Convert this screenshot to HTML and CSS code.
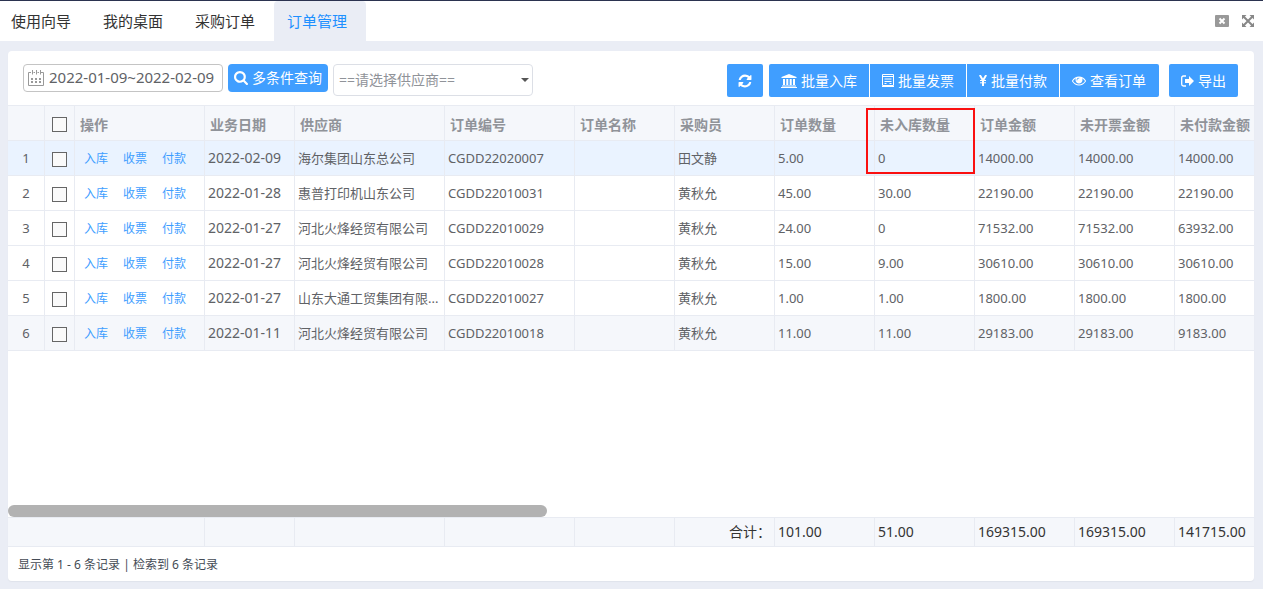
FILE: index.html
```html
<!DOCTYPE html>
<html lang="zh-CN">
<head>
<meta charset="utf-8">
<title>订单管理</title>
<link rel="stylesheet" href="styles.css">
</head>
<body>
<header class="topbar">
  <nav class="tabs">
    <a class="tab" href="#guide">使用向导</a>
    <a class="tab" href="#desktop">我的桌面</a>
    <a class="tab" href="#purchase">采购订单</a>
    <a class="tab tab-active" href="#orders" aria-current="page">订单管理</a>
  </nav>
  <div class="window-tools">
    <button class="tool" aria-label="关闭"><svg width="14" height="12" viewBox="0 0 14 12"><rect width="14" height="12" rx="1" fill="#999"/><path d="M4.500 3.500l5 5M9.500 3.500l-5 5" stroke="#fff" stroke-width="2"/></svg></button>
    <button class="tool" aria-label="全屏"><svg width="12" height="12" viewBox="0 0 12 12"><path d="M0 0h4.500L0 4.500zM12 0v4.500L7.500 0zM0 12V7.500L4.500 12zM12 12H7.500L12 7.500z" fill="#888"/><path d="M1.500 1.500l9 9M10.500 1.500l-9 9" stroke="#888" stroke-width="2"/></svg></button>
  </div>
</header>
<main class="card">
  <form class="toolbar">
    <div class="filters">
      <label class="date-box">
        <svg width="16" height="16" viewBox="0 0 16 16" fill="none" stroke="#999"><path d="M3 2.500H.500v13h15v-13H13M5.500 2.500H7M9.500 2.500H11"/><path d="M4.500 0v4.500M8.500 0v4.500M12.500 0v4.500"/><path d="M3 9h10M3 12h10" stroke-width="2" stroke-dasharray="2"/></svg>
        <input class="date-input" type="text" value="2022-01-09~2022-02-09" aria-label="日期范围">
      </label>
      <button type="button" class="btn btn-search"><svg width="14" height="14" viewBox="64 128 1664 1664" fill="currentColor"><path d="M1216 832q0-185-131.500-316.500t-316.500-131.500-316.500 131.500-131.500 316.500 131.500 316.500 316.500 131.500 316.500-131.500 131.500-316.500zm512 832q0 52-38 90t-90 38q-54 0-90-38l-343-342q-179 124-399 124-143 0-273.500-55.500t-225-150-150-225-55.500-273.500 55.500-273.500 150-225 225-150 273.500-55.500 273.500 55.500 225 150 150 225 55.500 273.500q0 220-124 399l343 343q37 37 37 90z"/></svg>多条件查询</button>
      <div class="select-box">
        <select class="select" aria-label="供应商"><option>==请选择供应商==</option></select>
      </div>
    </div>
    <div class="actions">
      <button type="button" class="btn btn-refresh" aria-label="刷新"><svg width="14" height="14" viewBox="64 64 1664 1664" fill="currentColor"><path d="M1639 1056q0 5-1 7-64 268-268 434.500t-478 166.500q-146 0-282.500-55t-243.500-157l-129 129q-19 19-45 19t-45-19-19-45v-448q0-26 19-45t45-19h448q26 0 45 19t19 45-19 45l-137 137q71 66 161 102t187 36q134 0 250-65t186-179q11-17 53-117 8-23 30-23h192q13 0 22.500 9.500t9.500 22.500zm25-800v448q0 26-19 45t-45 19h-448q-26 0-45-19t-19-45 19-45l138-138q-148-137-349-137-134 0-250 65t-186 179q-11 17-53 117-8 23-30 23h-199q-13 0-22.500-9.500t-9.500-22.500v-7q65-268 270-434.500t480-166.500q146 0 284 55.500t245 156.500l130-129q19-19 45-19t45 19 19 45z"/></svg></button>
      <div class="btn-group">
        <button type="button" class="btn"><svg width="16" height="14" viewBox="0 0 16 14" fill="currentColor"><path d="M8 0l7.500 3v1h-15V3zM2 5h2v6H2zM5.300 5h2v6h-2zM8.700 5h2v6h-2zM12 5h2v6h-2zM1 11.500h14v1H1zM0 13h16v1H0z"/></svg>批量入库</button>
        <button type="button" class="btn"><svg width="12" height="13" viewBox="0 0 12 13" fill="none" stroke="currentColor"><path d="M.500 .500h11v11H.500zM.500 2.500h11M2.500 5h7M2.500 7.500h7M2.500 9.500h2M7.500 9.500h2M0 12.500h12"/></svg>批量发票</button>
        <button type="button" class="btn"><svg width="8" height="11" viewBox="0 0 8 11" fill="none" stroke="currentColor"><path d="M.800 0L4 5.500 7.200 0M4 5v6" stroke-width="2"/><path d="M1 5.500h6M1 7.800h6"/></svg>批量付款</button>
        <button type="button" class="btn"><svg width="14" height="14" viewBox="0 64 1792 1792" fill="currentColor"><path d="M1664 960q-152-236-381-353 61 104 61 225 0 185-131.500 316.500t-316.500 131.500-316.500-131.500-131.500-316.500q0-121 61-225-229 117-381 353 133 205 333.500 326.500t434.500 121.500 434.500-121.500 333.500-326.500zm-720-384q0-20-14-34t-34-14q-125 0-214.500 89.500t-89.500 214.500q0 20 14 34t34 14 34-14 14-34q0-86 61-147t147-61q20 0 34-14t14-34zm848 384q0 34-20 69-140 230-376.500 368.500t-499.500 138.500-499.500-139-376.500-368q-20-35-20-69t20-69q140-229 376.500-368t499.500-139 499.500 139 376.500 368q20 35 20 69z"/></svg>查看订单</button>
      </div>
      <button type="button" class="btn btn-export"><svg width="13" height="12" viewBox="0 0 13 12"><path d="M5 1H2.500Q.700 1 .700 2.800v6.400Q.700 11 2.500 11H5" fill="none" stroke="currentColor" stroke-width="1.300"/><path d="M4 4h4V1l5 5-5 5V8H4z" fill="currentColor"/></svg>导出</button>
    </div>
  </form>

  <div class="grid">
    <table class="table">
      <colgroup><col class="w-no"><col class="w-check"><col class="w-name"><col class="w-date"><col class="w-supplier"><col class="w-name"><col span="7" class="w-num"></colgroup>
      <thead>
        <tr><th></th><th class="check"><input type="checkbox" aria-label="全选"></th><th>操作</th><th>业务日期</th><th>供应商</th><th>订单编号</th><th>订单名称</th><th>采购员</th><th>订单数量</th><th class="marked">未入库数量<span class="marker"></span></th><th>订单金额</th><th>未开票金额</th><th>未付款金额</th></tr>
      </thead>
      <tbody>
        <tr class="row-active"><td class="no">1</td><td class="check"><input type="checkbox" aria-label="选择第1行"></td><td class="ops"><a href="#in">入库</a><a href="#bill">收票</a><a href="#pay">付款</a></td><td class="date">2022-02-09</td><td>海尔集团山东总公司</td><td>CGDD22020007</td><td></td><td>田文静</td><td>5.00</td><td>0</td><td>14000.00</td><td>14000.00</td><td>14000.00</td></tr>
        <tr><td class="no">2</td><td class="check"><input type="checkbox" aria-label="选择第2行"></td><td class="ops"><a href="#in">入库</a><a href="#bill">收票</a><a href="#pay">付款</a></td><td class="date">2022-01-28</td><td>惠普打印机山东公司</td><td>CGDD22010031</td><td></td><td>黄秋允</td><td>45.00</td><td>30.00</td><td>22190.00</td><td>22190.00</td><td>22190.00</td></tr>
        <tr><td class="no">3</td><td class="check"><input type="checkbox" aria-label="选择第3行"></td><td class="ops"><a href="#in">入库</a><a href="#bill">收票</a><a href="#pay">付款</a></td><td class="date">2022-01-27</td><td>河北火烽经贸有限公司</td><td>CGDD22010029</td><td></td><td>黄秋允</td><td>24.00</td><td>0</td><td>71532.00</td><td>71532.00</td><td>63932.00</td></tr>
        <tr><td class="no">4</td><td class="check"><input type="checkbox" aria-label="选择第4行"></td><td class="ops"><a href="#in">入库</a><a href="#bill">收票</a><a href="#pay">付款</a></td><td class="date">2022-01-27</td><td>河北火烽经贸有限公司</td><td>CGDD22010028</td><td></td><td>黄秋允</td><td>15.00</td><td>9.00</td><td>30610.00</td><td>30610.00</td><td>30610.00</td></tr>
        <tr><td class="no">5</td><td class="check"><input type="checkbox" aria-label="选择第5行"></td><td class="ops"><a href="#in">入库</a><a href="#bill">收票</a><a href="#pay">付款</a></td><td class="date">2022-01-27</td><td>山东大通工贸集团有限...</td><td>CGDD22010027</td><td></td><td>黄秋允</td><td>1.00</td><td>1.00</td><td>1800.00</td><td>1800.00</td><td>1800.00</td></tr>
        <tr class="row-hover"><td class="no">6</td><td class="check"><input type="checkbox" aria-label="选择第6行"></td><td class="ops"><a href="#in">入库</a><a href="#bill">收票</a><a href="#pay">付款</a></td><td class="date">2022-01-11</td><td>河北火烽经贸有限公司</td><td>CGDD22010018</td><td></td><td>黄秋允</td><td>11.00</td><td>11.00</td><td>29183.00</td><td>29183.00</td><td>9183.00</td></tr>
      </tbody>
    </table>
  </div>
  <div class="scroll-track"><div class="scroll-thumb"></div></div>
  <div class="totals">
    <table class="table">
      <colgroup><col class="w-no"><col class="w-check"><col class="w-name"><col class="w-date"><col class="w-supplier"><col class="w-name"><col span="7" class="w-num"></colgroup>
      <tbody><tr><td colspan="3"></td><td></td><td></td><td></td><td></td><td class="total-label">合计：</td><td>101.00</td><td>51.00</td><td>169315.00</td><td>169315.00</td><td>141715.00</td></tr></tbody>
    </table>
  </div>
  <footer class="status">显示第 1 - 6 条记录 | 检索到 6 条记录</footer>
</main>
</body>
</html>
```

FILE: styles.css
```css
* { box-sizing: border-box; }

body {
  margin: 0;
  min-height: 100vh;
  display: flex;
  flex-direction: column;
  background: #eaedf5;
  color: #606266;
  font: 13px/20px "Noto Sans", "Noto Sans CJK SC", sans-serif;
}

button, input, select { font: inherit; }
a { text-decoration: none; }
svg { display: block; flex: none; }

.topbar {
  display: flex;
  justify-content: space-between;
  height: 41px;
  border-top: 1px solid #2b3350;
  background: #fff;
}
.tabs { display: flex; margin-left: -2px; }
.tab {
  padding: 0 19px 0 13px;
  color: #333;
  font-size: 15px;
  line-height: 40px;
}
.tab-active { border-radius: 4px 4px 0 0; background: #eaedf5; color: #1e90ff; }
.window-tools { display: flex; align-items: center; gap: 13px; padding-right: 9px; }
.tool { padding: 0; border: 0; background: none; }

.card {
  flex: 1;
  display: flex;
  flex-direction: column;
  margin: 10px 9px 8px 8px;
  border-radius: 4px;
  background: #fff;
  box-shadow: 0 1px 1px #dfe3eb;
  overflow: hidden;
}

.toolbar {
  display: flex;
  justify-content: space-between;
  margin: 0;
  padding: 13px 16px 8px 15px;
}
.filters { display: flex; align-items: flex-start; gap: 5px; }
.date-box {
  display: flex;
  align-items: center;
  gap: 5px;
  width: 200px;
  height: 28px;
  padding: 0 4px;
  border: 1px solid #c4c4c4;
  border-radius: 4px;
}
.date-input {
  flex: 1;
  min-width: 0;
  height: 26px;
  padding: 0 0 2px;
  border: 0;
  background: none;
  color: #606266;
  font-size: 15px;
}
.select-box { position: relative; width: 200px; }
.select-box::after {
  content: "";
  position: absolute;
  top: 14px;
  right: 4px;
  border: 4px solid transparent;
  border-top-color: #555;
}
.select {
  appearance: none;
  width: 100%;
  height: 32px;
  padding: 0 5px;
  border: 1px solid #dcdfe6;
  border-radius: 4px;
  background: #fff;
  color: #909399;
  font-size: 14px;
}

.btn {
  display: flex;
  align-items: center;
  justify-content: center;
  gap: 4px;
  height: 33px;
  padding: 0 12px;
  border: 0;
  border-radius: 2px;
  background: #409eff;
  color: #fff;
  font-size: 14px;
  white-space: nowrap;
}
.btn-search { height: 28px; padding: 0 6px; border-radius: 4px; }
.actions { display: flex; }
.btn-refresh { width: 36px; margin-right: 6px; }
.btn-group { display: flex; gap: 1px; margin-right: 10px; }
.btn-group .btn { border-radius: 0; }
.btn-group .btn:first-child { border-radius: 2px 0 0 2px; }
.btn-group .btn:last-child { padding-right: 13px; border-radius: 0 2px 2px 0; }

.grid { flex: 1; border-top: 1px solid #e8ebf2; overflow: hidden; }
.table {
  width: 1267px;
  table-layout: fixed;
  border-collapse: separate;
  border-spacing: 0;
}
.w-no { width: 37px; }
.w-check { width: 30px; }
.w-date { width: 90px; }
.w-supplier { width: 150px; }
.w-name { width: 130px; }
.w-num { width: 100px; }

.table th, .table td {
  height: 35px;
  padding: 0 3px;
  border-right: 1px solid #e8ebf2;
  border-bottom: 1px solid #e8ebf2;
  text-align: left;
  white-space: nowrap;
}
.table td { overflow: hidden; text-overflow: ellipsis; }
.table th {
  padding-top: 3px;
  padding-left: 5px;
  background: #f5f7fb;
  color: #909399;
  font-size: 14px;
  font-weight: 700;
}
.table .no { text-align: center; }
.table .check { padding: 3px 0 0; text-align: center; }
.check input {
  appearance: none;
  display: block;
  width: 15px;
  height: 15px;
  margin: 0 auto;
  border: 1px solid #666;
  background: #fafafa;
}
.table .ops { padding: 2px 0 0 9px; font-size: 12px; text-overflow: clip; }
.ops a { color: #409eff; }
.ops a + a { margin-left: 15px; }
.table .date { font-size: 14px; text-overflow: clip; }
.row-active { background: #eaf3ff; }
.row-hover { background: #f5f7fb; }

.marked { position: relative; }
.marker {
  position: absolute;
  z-index: 1;
  top: 2px;
  left: -9px;
  right: -1px;
  height: 66px;
  border: 2px solid #fa1010;
}

.scroll-track { height: 12px; }
.scroll-thumb { width: 539px; height: 12px; border-radius: 6px; background: #b2b2b2; }

.totals { border-top: 1px solid #e8ebf2; background: #f5f7fb; overflow: hidden; }
.totals td { height: 29px; color: #333; font-size: 14px; }
.totals .total-label { text-align: right; }

.status { padding: 8px 10px 6px; color: #444b55; font-size: 12px; }
```
